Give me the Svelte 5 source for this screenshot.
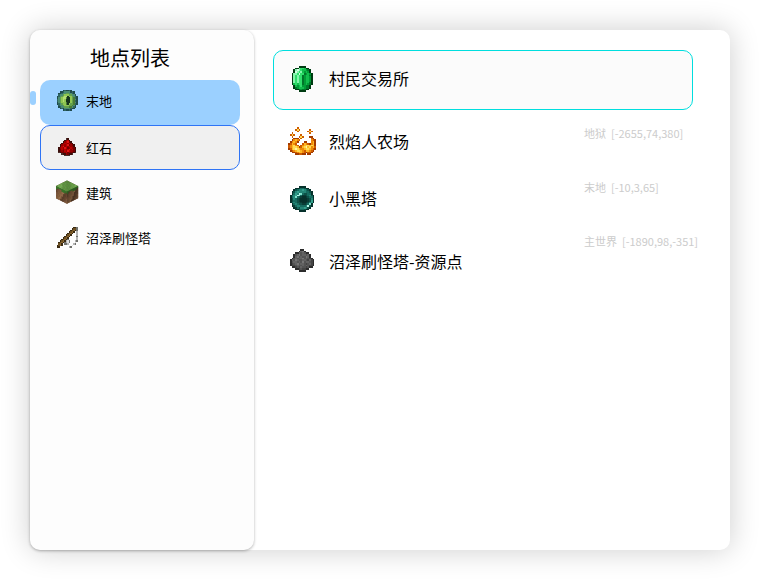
<script>
  // Each sprite is a 16×16 grid; a letter names a colour of its palette.
  const sprites = {
    eye: {
      colors: { o: '#1f4a4c', t: '#2f6660', s: '#4b8c74', g: '#63a04e', l: '#8fc653', y: '#b5de72', d: '#4a7c35', k: '#17341c' },
      rows: [
        '................',
        '.....otooto.....',
        '...ootssssoto...',
        '..ootssggssto...',
        '..tssglllggsso..',
        '.otsglyykllgsto.',
        '.osglyydkklgdto.',
        '.tsglylkkklgdso.',
        '.tsglylkkklgdto.',
        '.osgllldkklgdso.',
        '.otsglldklggdto.',
        '..tssglllggdso..',
        '..otssgggddsto..',
        '...otosssstoo...',
        '.....otooto.....',
        '................'
      ]
    },
    redstone: {
      colors: { o: '#3d0e0b', d: '#760000', m: '#960000', r: '#b80202', l: '#e01414', s: '#4a302c' },
      rows: [
        '................',
        '................',
        '.......so.......',
        '......omro......',
        '.....omrldo.....',
        '....omrrmrdo....',
        '...omrmrldmdo...',
        '...orlmrmrmmo...',
        '..omrmlrdmrmdo..',
        '..odrmrmrlmrdo..',
        '..odmdrmlrmmdo..',
        '..soddmrdmddos..',
        '....soomdoos....',
        '......ssss......',
        '................',
        '................'
      ]
    },
    powder: {
      colors: { o: '#2c2c2c', d: '#444444', m: '#535353', r: '#626262', l: '#757575' },
      rows: [
        '................',
        '.......oo.......',
        '......orlo......',
        '....oormrmoo....',
        '...omrlmrrmro...',
        '...orlmrmmlro...',
        '..omrmrrlmrmdo..',
        '.ormlrmmrrmdrdo.',
        '.omrrmrmlmrrmdo.',
        '.odmrlmrrmdmrdo.',
        '.oddmrmmrmrmddo.',
        '..oodmdrmmdmoo..',
        '....oodmddoo....',
        '......oooo......',
        '................',
        '................'
      ]
    },
    rod: {
      colors: { o: '#3a2a12', b: '#6b4e20', l: '#8b6731', g: '#70716d', s: '#b4b4b4', w: '#e0e0e0' },
      rows: [
        '................',
        '............oog.',
        '...........obbg.',
        '..........oblog.',
        '.........oblo.s.',
        '........oblo..s.',
        '.......oblo...s.',
        '......oblo....g.',
        '.....oblo.....s.',
        '....oblog.....s.',
        '...obloswg...sg.',
        '..oblogswg...w..',
        '..blo.ggs...sg..',
        '.oblo......w....',
        '.oo......sg.....',
        '................'
      ]
    },
    emerald: {
      colors: { o: '#003b12', d: '#00762a', m: '#009c36', g: '#12bd4c', l: '#30dd6b', p: '#84f5ac', w: '#d2ffe1' },
      rows: [
        '................',
        '......oooo......',
        '....oopllgoo....',
        '...opwplggmdo...',
        '...owplpgmgmo...',
        '..opplwlldmgmo..',
        '..oplplldmggdo..',
        '..oplplldmggmo..',
        '..oplplldmggmo..',
        '..oplplldmggmo..',
        '..oplplldmggdo..',
        '..oglglldmgmdo..',
        '...ogmglmmddo...',
        '...odmgggmddo...',
        '....oodmddoo....',
        '......oooo......'
      ]
    },
    fire: {
      colors: { r: '#a33b00', d: '#cf5c00', o: '#ee8a0a', y: '#ffb824', l: '#ffdc55', w: '#fff3a2' },
      rows: [
        '.....d..........',
        '....dld.....d...',
        '.....d.....dld..',
        '..d.........d...',
        '.dld...d........',
        '..d...dld...rr..',
        '...rrr.d.....dr.',
        '..royod......odr',
        '.royor...rr..oyr',
        'rdyod...dyodroyr',
        'doylod.doyllylyr',
        'doyllyrdylwyloyd',
        'rdylwlyooyllyodr',
        '.rdoyllyodyyodr.',
        '..rrdoyyodrddr..',
        '....rrddrr.rr...'
      ]
    },
    pearl: {
      colors: { o: '#06312b', k: '#0a3d36', d: '#0d5147', m: '#156b5f', t: '#238676', l: '#35a08d', p: '#7be0ca', w: '#b9f7e9' },
      rows: [
        '................',
        '......oooo......',
        '....ookmmdoo....',
        '...odmttltmdo...',
        '..odtlttttmmdo..',
        '..omltwpmddmmo..',
        '.omtlwpmkkdmtdo.',
        '.omtpmdkookdmmo.',
        '.odtmdkooookdto.',
        '.odmmdkooookdlo.',
        '.omtmddkookdtlo.',
        '..omtmddkkdmpo..',
        '..okmttmmmtwdo..',
        '...okmdttltdo...',
        '....oodmmdoo....',
        '......oooo......'
      ]
    }
  };

  const categories = [
    { name: '末地', icon: 'eye', state: 'active' },
    { name: '红石', icon: 'redstone', state: 'focused' },
    { name: '建筑', icon: 'grass', state: '' },
    { name: '沼泽刷怪塔', icon: 'rod', state: '' }
  ];
  const places = [
    { name: '村民交易所', icon: 'emerald', selected: true },
    { name: '烈焰人农场', icon: 'fire' },
    { name: '小黑塔', icon: 'pearl' },
    { name: '沼泽刷怪塔-资源点', icon: 'powder' }
  ];
  const coordinates = ['地狱  [-2655,74,380]', '末地  [-10,3,65]', '主世界  [-1890,98,-351]'];

  const soil = ['#5a3e2a', '#7d583e', '#966d4c', '#664731', '#86613f'];
  const turf = ['#5a9040', '#68a24a', '#76b058', '#609845'];
  const cells = Array.from({ length: 64 }, (_, n) => ({ x: n % 8, y: Math.floor(n / 8), k: (n * 7 + Math.floor(n / 8) * 5 + (n % 3)) }));
</script>

{#snippet sprite(name)}
  {#if name === 'grass'}
    <svg class="sprite" viewBox="0 0 24 24" aria-hidden="true">
      <path d="M12 0.5 23 6v12.2L12 23.5 1 18.2V6z" fill="#5a3e2a" />
      <g transform="matrix(1.375 .69 -1.375 .69 12 .5)">
        {#each cells as c}<rect x={c.x} y={c.y} width="1.2" height="1.2" fill={turf[c.k % 4]} />{/each}
      </g>
      <g transform="matrix(1.375 .69 0 1.5 1 6)">
        {#each cells as c}<rect x={c.x} y={c.y} width="1.2" height="1.2" fill={c.y < 1 + (c.k % 2) ? '#37752a' : soil[c.k % 5]} />{/each}
      </g>
      <g transform="matrix(1.375 -.69 0 1.5 12 11.5)">
        {#each cells as c}<rect x={c.x} y={c.y} width="1.2" height="1.2" fill={c.y < 1 + (c.k % 2) ? '#37752a' : soil[c.k % 5]} />{/each}
        <rect width="8" height="8" fill="#000" opacity=".2" />
      </g>
    </svg>
  {:else}
    <svg class="sprite" viewBox="0 0 16 16" shape-rendering="crispEdges" aria-hidden="true">
      {#each sprites[name].rows as row, y}
        {#each [...row] as p, x}
          {#if p !== '.'}<rect {x} {y} width="1" height="1" fill={sprites[name].colors[p]} />{/if}
        {/each}
      {/each}
    </svg>
  {/if}
{/snippet}

<div class="window">
  <aside>
    <h1>地点列表</h1>
    <ul>
      {#each categories as c}
        <li>
          {#if c.state === 'active'}<span class="marker"></span>{/if}
          <button class="category {c.state}">{@render sprite(c.icon)}<span>{c.name}</span></button>
        </li>
      {/each}
    </ul>
  </aside>
  <main>
    <ul class="places">
      {#each places as p}
        <li><button class="place" class:selected={p.selected}>{@render sprite(p.icon)}<span>{p.name}</span></button></li>
      {/each}
    </ul>
    <ul class="coordinates">
      {#each coordinates as text}<li>{text}</li>{/each}
    </ul>
  </main>
</div>

<style>
  :global(body) { background: #fff; }
  .window {
    display: flex;
    min-height: calc(100vh - 64px);
    margin: 30px 34px 34px 30px;
    border-radius: 10px;
    background: #fff;
    box-shadow: 0 0 30px rgba(0, 0, 0, 0.2);
    font-family: "Noto Sans CJK SC", "Noto Sans", sans-serif;
    color: #000;
  }
  ul { list-style: none; margin: 0; padding: 0; }
  button {
    display: flex;
    align-items: center;
    box-sizing: border-box;
    width: 100%;
    margin: 0;
    border: 1px solid transparent;
    background: none;
    color: inherit;
    font-family: inherit;
    text-align: left;
    cursor: pointer;
  }
  .sprite { flex: none; display: block; }
  aside {
    box-sizing: border-box;
    flex: none;
    width: 224px;
    padding: 12px 14px 12px 10px;
    border-radius: 10px;
    background: #fdfdfd;
    box-shadow: 0 1px 3px rgba(0, 0, 0, 0.3);
  }
  h1 {
    margin: 0 0 6px;
    padding-right: 20px;
    font-size: 20px;
    font-weight: 400;
    line-height: 32px;
    text-align: center;
  }
  aside li { position: relative; }
  .marker {
    position: absolute;
    left: -10px;
    top: 11px;
    width: 6px;
    height: 14px;
    border-radius: 3px;
    background: #9bd0ff;
  }
  .category {
    height: 45px;
    padding: 0 14px 1px;
    gap: 7px;
    border-radius: 10px;
    font-size: 13px;
  }
  .category .sprite { width: 24px; height: 24px; }
  .category.active { background: #9bd0ff; padding-bottom: 5px; }
  .category.focused { background: #f0f0f0; border-color: #2f74f5; }
  main {
    position: relative;
    flex: 1;
    padding: 20px 37px 20px 19px;
  }
  .place {
    height: 60px;
    padding: 0 14px 4px;
    gap: 13px;
    border-radius: 10px;
    font-size: 16px;
  }
  .place .sprite { width: 28px; height: 28px; }
  .place.selected { background: #fbfbfb; border-color: #00dede; }
  .places li:nth-child(even) { margin: 3px 0 -3px; }
  .coordinates {
    position: absolute;
    top: 76px;
    right: 0;
    width: 146px;
    font-size: 11px;
    line-height: 54px;
    color: #ccc;
    white-space: pre;
    pointer-events: none;
  }
</style>
